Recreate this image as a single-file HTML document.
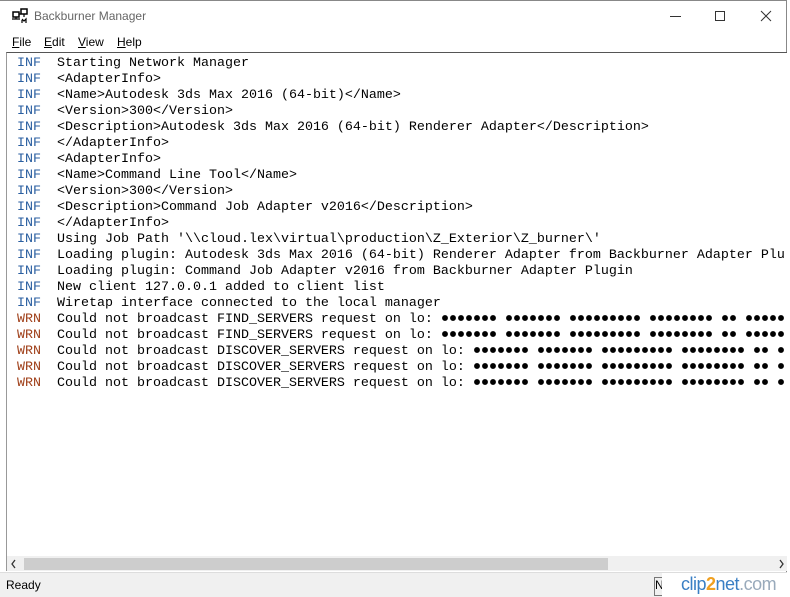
<!DOCTYPE html>
<html><head><style>
body{margin:0;width:790px;height:596px;background:#fff;position:relative;overflow:hidden;font-family:"Liberation Sans",sans-serif}
.win{position:absolute;left:0;top:0;width:787px;height:596px;border-top:1px solid #888;border-right:1px solid #888;box-sizing:border-box}
.title{position:absolute;left:34px;top:9px;font-size:12px;color:#666}
.menu{position:absolute;top:35px;font-size:12px;color:#000}
.menu span{position:absolute}
.menu u{text-decoration-thickness:1px}
.box{position:absolute;left:6px;top:52px;width:781px;height:519px;border-top:1px solid #555;border-left:1px solid #999;box-sizing:border-box;background:#fff}
pre{position:absolute;left:17px;top:56px;margin:0;font-family:"Liberation Mono",monospace;font-size:13.33px;line-height:16px;color:#000;white-space:pre;width:767px;overflow:hidden}
.i{color:#2a5ea0}.w{color:#a0401a}
.g{display:inline-block;height:10px;vertical-align:-1px;background-image:radial-gradient(circle at 4px 5px,#000 2.6px,transparent 3.2px);background-size:8px 10px;background-repeat:repeat-x}
.sb{position:absolute;left:7px;top:556px;width:780px;height:15px;background:#f0f0f0}
.thumb{position:absolute;left:24px;top:558px;width:584px;height:12px;background:#cdcdcd}
.status{position:absolute;left:0;top:572px;width:787px;height:24px;background:#f0f0f0;border-top:1px solid #ddd}
</style></head><body>
<div class="win"></div>
<svg style="position:absolute;left:12px;top:8px" width="18" height="16" viewBox="0 0 18 16"><rect x="1" y="4" width="6" height="5" fill="none" stroke="#000" stroke-width="1.5"/><rect x="9" y="1" width="6" height="5" fill="none" stroke="#000" stroke-width="1.5"/><path d="M0 11h8M4 9v2M7 6h2M12 6v3M10 12v3M10 11l2 2 2-2v4" stroke="#000" fill="none" stroke-width="1.2"/></svg>
<div class="title">Backburner Manager</div>
<svg style="position:absolute;left:660px;top:8px" width="120" height="18"><path d="M10 8.5h11" stroke="#333"/><rect x="55.5" y="3.5" width="9" height="9" fill="none" stroke="#333"/><path d="M101 3l10 10M111 3l-10 10" stroke="#333"/></svg>
<div class="menu"><span style="left:12px"><u>F</u>ile</span><span style="left:44px"><u>E</u>dit</span><span style="left:78px"><u>V</u>iew</span><span style="left:117px"><u>H</u>elp</span></div>
<div class="box"></div>
<pre><span class="i">INF</span>  Starting Network Manager
<span class="i">INF</span>  &lt;AdapterInfo&gt;
<span class="i">INF</span>  &lt;Name&gt;Autodesk 3ds Max 2016 (64-bit)&lt;/Name&gt;
<span class="i">INF</span>  &lt;Version&gt;300&lt;/Version&gt;
<span class="i">INF</span>  &lt;Description&gt;Autodesk 3ds Max 2016 (64-bit) Renderer Adapter&lt;/Description&gt;
<span class="i">INF</span>  &lt;/AdapterInfo&gt;
<span class="i">INF</span>  &lt;AdapterInfo&gt;
<span class="i">INF</span>  &lt;Name&gt;Command Line Tool&lt;/Name&gt;
<span class="i">INF</span>  &lt;Version&gt;300&lt;/Version&gt;
<span class="i">INF</span>  &lt;Description&gt;Command Job Adapter v2016&lt;/Description&gt;
<span class="i">INF</span>  &lt;/AdapterInfo&gt;
<span class="i">INF</span>  Using Job Path '\\cloud.lex\virtual\production\Z_Exterior\Z_burner\'
<span class="i">INF</span>  Loading plugin: Autodesk 3ds Max 2016 (64-bit) Renderer Adapter from Backburner Adapter Plugin
<span class="i">INF</span>  Loading plugin: Command Job Adapter v2016 from Backburner Adapter Plugin
<span class="i">INF</span>  New client 127.0.0.1 added to client list
<span class="i">INF</span>  Wiretap interface connected to the local manager
<span class="w">WRN</span>  Could not broadcast FIND_SERVERS request on lo: <span class="g" style="width:56px"></span> <span class="g" style="width:56px"></span> <span class="g" style="width:72px"></span> <span class="g" style="width:64px"></span> <span class="g" style="width:16px"></span> <span class="g" style="width:48px"></span>
<span class="w">WRN</span>  Could not broadcast FIND_SERVERS request on lo: <span class="g" style="width:56px"></span> <span class="g" style="width:56px"></span> <span class="g" style="width:72px"></span> <span class="g" style="width:64px"></span> <span class="g" style="width:16px"></span> <span class="g" style="width:48px"></span>
<span class="w">WRN</span>  Could not broadcast DISCOVER_SERVERS request on lo: <span class="g" style="width:56px"></span> <span class="g" style="width:56px"></span> <span class="g" style="width:72px"></span> <span class="g" style="width:64px"></span> <span class="g" style="width:16px"></span> <span class="g" style="width:16px"></span>
<span class="w">WRN</span>  Could not broadcast DISCOVER_SERVERS request on lo: <span class="g" style="width:56px"></span> <span class="g" style="width:56px"></span> <span class="g" style="width:72px"></span> <span class="g" style="width:64px"></span> <span class="g" style="width:16px"></span> <span class="g" style="width:16px"></span>
<span class="w">WRN</span>  Could not broadcast DISCOVER_SERVERS request on lo: <span class="g" style="width:56px"></span> <span class="g" style="width:56px"></span> <span class="g" style="width:72px"></span> <span class="g" style="width:64px"></span> <span class="g" style="width:16px"></span> <span class="g" style="width:16px"></span></pre>
<div class="sb"></div><div class="thumb"></div>
<svg style="position:absolute;left:9px;top:559px" width="780" height="10"><path d="M6 1l-3 4 3 4" stroke="#333" fill="none" stroke-width="1.3"/><path d="M771 1l3 4-3 4" stroke="#333" fill="none" stroke-width="1.3"/></svg>
<div class="status"><span style="position:absolute;left:6px;top:5px;font-size:12px">Ready</span>
<div style="position:absolute;left:654px;top:4px;width:8px;height:17px;border:1px solid #777;border-right:none;font-size:12px;overflow:hidden">N</div>
<div style="position:absolute;left:662px;top:0;width:125px;height:24px;background:#fff"></div>
<span style="position:absolute;left:681px;top:1px;font-size:18px;color:#3a7fc4;letter-spacing:-0.5px">clip<b style="color:#f0a020">2</b>net<span style="color:#9ab">.com</span></span></div>
</body></html>
